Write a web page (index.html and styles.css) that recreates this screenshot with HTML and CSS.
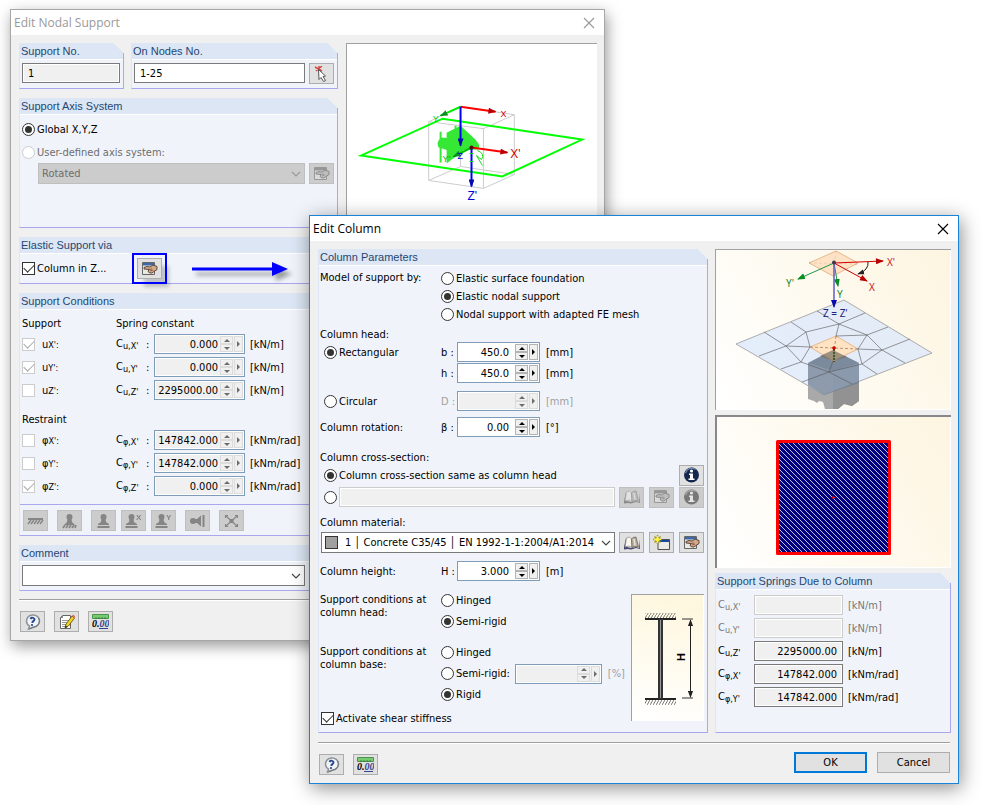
FILE: index.html
```html
<!DOCTYPE html>
<html lang="en">
<head>
  <meta charset="UTF-8" />
  <meta name="viewport" content="width=device-width, initial-scale=1.0"/>
  <title>Edit Nodal Support</title>
  <link rel="stylesheet" href="styles.css">
</head>
<body>
  <!-- Shared icons -->
  <svg class="defs" aria-hidden="true">
    <symbol id="i-close" viewBox="0 0 12 12"><path d="M1 1l10 10M11 1L1 11" fill="none" stroke="currentColor" stroke-width="1.1"/></symbol>
    <symbol id="i-chevron" viewBox="0 0 10 6"><path d="M1 1l4 4 4-4" fill="none" stroke="currentColor" stroke-width="1.1"/></symbol>
    <symbol id="i-edit" viewBox="0 0 17 16">
      <path d="M1.500 1.500h12v12h-12z" fill="#e9e9e2" stroke="#666"/><path d="M2 2h11v2.500H2z" fill="#3f68a8"/>
      <path d="M3 6.500l3-1 3 .5 3-2 4 1.500v3l-3 2-2 1.500H9L7 10.500 8 8.500 3 8z" fill="#d3a888" stroke="#4e3a30" stroke-width=".9"/>
      <path d="M8 8.500l3-.5M9 10l3-1" stroke="#77513e" stroke-width=".8"/>
    </symbol>
    <symbol id="i-book" viewBox="0 0 17 16">
      <path d="M1 12l2-9 1 9 4 1 5-1 3 1V4l1 10-4-1-5 1.500-3-.5-4 .5z" fill="#46466e"/>
      <path d="M3.500 3l3-1 2 2 .5 8.500-3-1.500-4 1z" fill="#faf8ee" stroke="#8c877c" stroke-width=".7"/>
      <path d="M8.500 4l1.500-1.500 3-.5 2.500 10-3-.5-3.500 1z" fill="#b8ad9c" stroke="#5e5850" stroke-width=".7"/><path d="M11 4l1 6.500" stroke="#e8e2d6" stroke-width="1.500"/>
    </symbol>
    <symbol id="i-new" viewBox="0 0 17 16">
      <path d="M5 4.500h11.500v10H5z" fill="#eceae6" stroke="#4d4d4d"/><path d="M6 5h10v2H6z" fill="#1748a0"/>
      <path d="M4.500 0v9M0 4.500h9M1.500 1.500l6 6M7.500 1.500l-6 6" stroke="#a79d1d" stroke-width="1.500"/><path d="M4.500 1v7M1 4.500h7" stroke="#fff23c"/><circle cx="4.500" cy="4.500" r="2" fill="#fff23c"/>
    </symbol>
    <symbol id="i-info" viewBox="0 0 16 16">
      <circle cx="8" cy="8" r="7.500" fill="#14284f"/><path d="M2 6a6.500 6.500 0 0 1 10-3.500" fill="none" stroke="#6c82aa" stroke-width="1.300"/>
      <circle cx="8" cy="4" r="1.600" fill="#fff"/><path d="M5.500 6.500h4v5h1.500v1.500H5v-1.500h1.500v-3.500h-1z" fill="#fff"/>
    </symbol>
    <symbol id="i-help" viewBox="0 0 16 16">
      <path d="M8 1a6.500 6 0 0 1 1 12l-5 2 1-3A6.500 6 0 0 1 8 1z" fill="#f1f4f9" stroke="#8c9197" stroke-width="1.500"/>
      <path d="M14 4a6 6 0 0 1-4 9l-5 2" fill="none" stroke="#73777c"/>
      <path d="M6 5q1-2 3-1 2 1 0 3L8 8v1" fill="none" stroke="#27478f" stroke-width="1.900"/><circle cx="7.500" cy="11" r="1.100" fill="#27478f"/>
    </symbol>
    <symbol id="i-note" viewBox="0 0 17 16">
      <path d="M4.500 1.500h8v13h-10v-11z" fill="#fff" stroke="#666"/><path d="M2 4h3V1" fill="#888"/>
      <path d="M4 6.500h7M4 8.500h6M4 10.500h4M4 12.500h3" stroke="#999"/>
      <path d="M14 2l2.500 2-6 8-3.500 2 1-4z" fill="#f2d221" stroke="#55480e" stroke-width=".8"/><path d="M14 2l1-1.500 2.500 2-1 1.500z" fill="#e06b60"/><path d="M7 14l.5-2.500 2 1.500z" fill="#222"/>
    </symbol>
    <symbol id="i-pick" viewBox="0 0 17 16">
      <path d="M2 1l7 4M9 0L3 5M6 0v3" stroke="#d64848" stroke-width="1.500"/>
      <path d="M5.500 3.500l7 6.500-2.500.5 2.500 4-2 1-2.500-4-2 2z" fill="#fff" stroke="#444" stroke-width=".9"/>
    </symbol>
    <symbol id="i-line" viewBox="0 0 17 16"><path d="M1 5h15v2H1z" fill="currentColor"/><path d="M1 11l3-4M4 11l3-4M7 11l3-4M10 11l3-4M13 11l3-4" stroke="currentColor" stroke-width="1.400"/></symbol>
    <symbol id="i-fixed" viewBox="0 0 17 16"><circle cx="8.500" cy="4" r="3" fill="currentColor"/><path d="M6.500 6h4l.5 3 3 3H3l3-3z" fill="currentColor"/><path d="M2 15l2-3M5 15l2-3M8 15l2-3M11 15l2-3M14 15l1-3" stroke="currentColor" stroke-width="1.700"/></symbol>
    <symbol id="i-hinge" viewBox="0 0 17 16"><circle cx="8.500" cy="4" r="3" fill="currentColor"/><path d="M6.500 6h4l.5 3 3 2v1H3v-1l3-2zM2.500 13h12v2h-12z" fill="currentColor"/></symbol>
    <symbol id="i-side" viewBox="0 0 17 16"><circle cx="4" cy="8" r="3" fill="currentColor"/><path d="M6 6h2l4-3.500v11L8 10H6zM13.500 2h2v12h-2z" fill="currentColor"/></symbol>
    <symbol id="i-free" viewBox="0 0 17 16"><path d="M3 3l11 10M14 3L3 13M2.500 5V2.500H5M12 2.500h2.500V5M2.500 11v2.500H5M12 13.500h2.500V11" fill="none" stroke="currentColor" stroke-width="1.100"/><path d="M6.500 6h4v4h-4z" fill="currentColor"/></symbol>
    <marker id="a-red" viewBox="0 0 8 6" refX="7" refY="3" markerWidth="9" markerHeight="6" markerUnits="userSpaceOnUse" orient="auto"><path d="M0 0l8 3-8 3z" fill="#b80000"/></marker>
    <marker id="a-green" viewBox="0 0 8 6" refX="7" refY="3" markerWidth="8" markerHeight="6" markerUnits="userSpaceOnUse" orient="auto"><path d="M0 0l8 3-8 3z" fill="#078d20"/></marker>
    <marker id="a-blue" viewBox="0 0 8 6" refX="7" refY="3" markerWidth="9" markerHeight="6" markerUnits="userSpaceOnUse" orient="auto"><path d="M0 0l8 3-8 3z" fill="#0808b0"/></marker>
    <marker id="a-dark" viewBox="0 0 8 6" refX="7" refY="3" markerWidth="7" markerHeight="6" markerUnits="userSpaceOnUse" orient="auto-start-reverse"><path d="M0 0l8 3-8 3z" fill="#222"/></marker>
    <pattern id="hatch" width="5" height="5" patternUnits="userSpaceOnUse"><rect width="5" height="5" fill="#000080"/><path d="M-1-1l7 7" stroke="#d5d5ee" stroke-width=".9"/></pattern>
    <pattern id="ground" width="3" height="5" patternUnits="userSpaceOnUse"><path d="M0 5l3-5" stroke="#555" stroke-width=".8"/></pattern>
  </svg>

  <main class="desktop">
    <!-- Nodal support window -->
    <section class="window window-support">
      <header class="titlebar">
        <h1>Edit Nodal Support</h1>
        <button class="close" aria-label="Close"><svg><use href="#i-close"/></svg></button>
      </header>
      <div class="support-content">
        <div class="column">
          <div class="top-groups">
            <section class="group">
              <h2><label for="support-no">Support No.</label></h2>
              <div class="group-body"><input class="text readonly" id="support-no" value="1" readonly></div>
            </section>
            <section class="group">
              <h2><label for="nodes-no">On Nodes No.</label></h2>
              <div class="group-body with-button">
                <input class="text" id="nodes-no" value="1-25">
                <button class="tool" aria-label="Pick nodes"><svg><use href="#i-pick"/></svg></button>
              </div>
            </section>
          </div>

          <section class="group axis-group">
            <h2>Support Axis System</h2>
            <div class="axis-body">
              <label class="option"><input type="radio" name="axis" checked>Global X,Y,Z</label>
              <label class="option off"><input type="radio" name="axis" disabled>User-defined axis system:</label>
              <div class="axis-select">
                <div class="select"><select aria-label="Axis system" disabled><option>Rotated</option></select><svg><use href="#i-chevron"/></svg></div>
                <button class="tool" aria-label="Edit axis system" disabled><svg><use href="#i-edit"/></svg></button>
              </div>
            </div>
          </section>

          <section class="group elastic-group">
            <h2>Elastic Support via</h2>
            <div class="elastic-body">
              <label class="option"><input type="checkbox" checked>Column in Z...</label>
              <button class="tool marked" aria-label="Edit column"><svg><use href="#i-edit"/></svg></button>
              <svg class="arrow" viewBox="0 0 96 20"><path d="M0 10h82" stroke="#00f" stroke-width="3"/><path d="M80 3l16 7-16 7z" fill="#00f"/></svg>
            </div>
          </section>

          <section class="group conditions-group">
            <h2>Support Conditions</h2>
            <div class="conditions">
              <div class="cond-head"><span>Support</span><span>Spring constant</span></div>
              <div class="cond-row">
                <input type="checkbox" id="ux" checked disabled><label for="ux">u<small>X':</small></label>
                <label for="cux">C<sub>u,X'</sub></label><span>:</span>
                <div class="spin off"><input id="cux" value="0.000" readonly><span class="steps"><button aria-label="Up"></button><button aria-label="Down"></button></span><button class="more" aria-label="More"></button></div>
                <span>[kN/m]</span>
              </div>
              <div class="cond-row">
                <input type="checkbox" id="uy" checked disabled><label for="uy">u<small>Y':</small></label>
                <label for="cuy">C<sub>u,Y'</sub></label><span>:</span>
                <div class="spin off"><input id="cuy" value="0.000" readonly><span class="steps"><button aria-label="Up"></button><button aria-label="Down"></button></span><button class="more" aria-label="More"></button></div>
                <span>[kN/m]</span>
              </div>
              <div class="cond-row">
                <input type="checkbox" id="uz" disabled><label for="uz">u<small>Z':</small></label>
                <label for="cuz">C<sub>u,Z'</sub></label><span>:</span>
                <div class="spin off"><input id="cuz" value="2295000.00" readonly><span class="steps"><button aria-label="Up"></button><button aria-label="Down"></button></span><button class="more" aria-label="More"></button></div>
                <span>[kN/m]</span>
              </div>
              <div class="cond-head restraint"><span>Restraint</span></div>
              <div class="cond-row">
                <input type="checkbox" id="px" disabled><label for="px">φ<small>X':</small></label>
                <label for="cpx">C<sub>φ,X'</sub></label><span>:</span>
                <div class="spin off"><input id="cpx" value="147842.000" readonly><span class="steps"><button aria-label="Up"></button><button aria-label="Down"></button></span><button class="more" aria-label="More"></button></div>
                <span>[kNm/rad]</span>
              </div>
              <div class="cond-row">
                <input type="checkbox" id="py" disabled><label for="py">φ<small>Y':</small></label>
                <label for="cpy">C<sub>φ,Y'</sub></label><span>:</span>
                <div class="spin off"><input id="cpy" value="147842.000" readonly><span class="steps"><button aria-label="Up"></button><button aria-label="Down"></button></span><button class="more" aria-label="More"></button></div>
                <span>[kNm/rad]</span>
              </div>
              <div class="cond-row">
                <input type="checkbox" id="pz" checked disabled><label for="pz">φ<small>Z':</small></label>
                <label for="cpz">C<sub>φ,Z'</sub></label><span>:</span>
                <div class="spin off"><input id="cpz" value="0.000" readonly><span class="steps"><button aria-label="Up"></button><button aria-label="Down"></button></span><button class="more" aria-label="More"></button></div>
                <span>[kNm/rad]</span>
              </div>
            </div>
            <div class="presets">
              <button class="tool" aria-label="Line support" disabled><svg><use href="#i-line"/></svg></button>
              <button class="tool" aria-label="Fixed" disabled><svg><use href="#i-fixed"/></svg></button>
              <div class="preset-set">
                <button class="tool" aria-label="Hinged" disabled><svg><use href="#i-hinge"/></svg></button>
                <button class="tool" aria-label="Sliding in X" disabled><svg viewBox="0 0 17 16"><use href="#i-hinge" x="-2" y="0" width="17" height="16"/><text x="11" y="7" class="axis-mark">X</text></svg></button>
                <button class="tool" aria-label="Sliding in Y" disabled><svg viewBox="0 0 17 16"><use href="#i-hinge" x="-2" y="0" width="17" height="16"/><text x="11" y="7" class="axis-mark">Y</text></svg></button>
              </div>
              <button class="tool" aria-label="Sideways" disabled><svg><use href="#i-side"/></svg></button>
              <button class="tool" aria-label="Free" disabled><svg><use href="#i-free"/></svg></button>
            </div>
          </section>

          <section class="group">
            <h2><label for="comment">Comment</label></h2>
            <div class="group-body with-button">
              <div class="select"><select id="comment"><option></option></select><svg><use href="#i-chevron"/></svg></div>
              <button class="tool" aria-label="Pick comment"><svg><use href="#i-book"/></svg></button>
            </div>
          </section>
        </div>

        <div class="preview view-support">
          <svg viewBox="0 0 251 172" role="img" aria-label="Support axes">
            <g fill="none" stroke="#ccc">
              <path d="M82 78v59l55 8V85zM82 78l32-15 54 8-31 14M168 71v60l-31 14M82 137l32-14 54 8M114 63v60"/>
            </g>
            <g fill="#12e512" opacity=".85">
              <path d="M100 89l14-7 16 15-30 23z"/><path d="M95 94l34 3q5 3 3 9l-30 1-10-3q-3-6 3-10z"/><path d="M93 88h2v31h-2zM108 82h2v26h-2z"/>
            </g>
            <path d="M14 112l82-37 140 21-80 37z" fill="none" stroke="#0f0" stroke-width="2"/>
            <path d="M114 63l35 5" stroke="red" stroke-width="2" marker-end="url(#a-red)"/>
            <path d="M114 63l-20 9" stroke="#0e0" stroke-width="2" marker-end="url(#a-green)"/>
            <path d="M114 63v39" stroke="#00f" stroke-width="2" marker-end="url(#a-blue)"/>
            <path d="M125 104l36 5" stroke="red" stroke-width="2" marker-end="url(#a-red)"/>
            <path d="M125 104l-18 9" stroke="#0b0" stroke-width="2" marker-end="url(#a-green)"/>
            <path d="M125 104v39" stroke="#00f" stroke-width="2" marker-end="url(#a-blue)"/>
            <path d="M131 107q8 3 4 9l-5-4 6 10M123 110h4M123 118h4" fill="none" stroke="#1d1"/>
            <circle cx="125" cy="104" r="2" fill="#501010"/>
            <g class="view-label"><text x="154" y="73" fill="#d00000">X</text><text x="86" y="78" fill="#0c0">Y</text><text x="111" y="115" fill="#00d">Z</text><text x="164" y="114" class="large" fill="#d00000">X'</text><text x="96" y="118" fill="#0b0">Y'</text><text x="121" y="157" class="large" fill="#00d">Z'</text></g>
          </svg>
        </div>
      </div>
      <footer class="window-footer">
        <button class="tool" aria-label="Help"><svg><use href="#i-help"/></svg></button>
        <button class="tool" aria-label="Notes"><svg><use href="#i-note"/></svg></button>
        <button class="tool" aria-label="Units">
          <svg viewBox="0 0 17 16"><path d="M.5.5h16v4H.5z" fill="#78cb72" stroke="#4b9548"/><path d="M4 3v2M7 3v2M10 3v2M13 3v2" stroke="#2e6d2f" stroke-width=".8"/><path d="M7 14.500h9" stroke="#31458e"/><text x="0" y="13" class="units-text">0.<tspan fill="#31458e">00</tspan></text></svg>
        </button>
      </footer>
    </section>

    <!-- Column window -->
    <section class="window window-column">
      <header class="titlebar">
        <h1>Edit Column</h1>
        <button class="close" aria-label="Close"><svg><use href="#i-close"/></svg></button>
      </header>
      <div class="column-content">
        <section class="group parameters">
          <h2>Column Parameters</h2>
          <div class="form">
            <div class="row model">
              <span>Model of support by:</span>
              <div class="stack">
                <label class="option"><input type="radio" name="model">Elastic surface foundation</label>
                <label class="option"><input type="radio" name="model" checked>Elastic nodal support</label>
                <label class="option"><input type="radio" name="model">Nodal support with adapted FE mesh</label>
              </div>
            </div>

            <div class="caption">Column head:</div>
            <div class="row field">
              <label class="option indent"><input type="radio" name="head" checked>Rectangular</label>
              <label for="dim-b">b :</label>
              <div class="spin"><input id="dim-b" value="450.0"><span class="steps"><button aria-label="Up"></button><button aria-label="Down"></button></span><button class="more" aria-label="More"></button></div>
              <span>[mm]</span>
            </div>
            <div class="row field">
              <span></span>
              <label for="dim-h">h :</label>
              <div class="spin"><input id="dim-h" value="450.0"><span class="steps"><button aria-label="Up"></button><button aria-label="Down"></button></span><button class="more" aria-label="More"></button></div>
              <span>[mm]</span>
            </div>
            <div class="row field circular">
              <label class="option indent"><input type="radio" name="head">Circular</label>
              <label class="faint" for="dim-d">D :</label>
              <div class="spin off"><input id="dim-d" disabled><span class="steps"><button aria-label="Up" disabled></button><button aria-label="Down" disabled></button></span><button class="more" aria-label="More" disabled></button></div>
              <span class="faint">[mm]</span>
            </div>
            <div class="row field rotation">
              <span>Column rotation:</span>
              <label for="beta">β :</label>
              <div class="spin"><input id="beta" value="0.00"><span class="steps"><button aria-label="Up"></button><button aria-label="Down"></button></span><button class="more" aria-label="More"></button></div>
              <span>[°]</span>
            </div>

            <div class="caption section-caption">Column cross-section:</div>
            <div class="row section-row">
              <label class="option indent"><input type="radio" name="section" checked>Column cross-section same as column head</label>
              <button class="tool" aria-label="Section info"><svg><use href="#i-info"/></svg></button>
            </div>
            <div class="row section-row">
              <input class="indent" type="radio" name="section" aria-label="Own cross-section">
              <input class="text" aria-label="Cross-section" disabled>
              <div class="tools">
                <button class="tool" aria-label="Section library" disabled><svg><use href="#i-book"/></svg></button>
                <button class="tool" aria-label="Edit section" disabled><svg><use href="#i-edit"/></svg></button>
                <button class="tool" aria-label="Section details" disabled><svg><use href="#i-info"/></svg></button>
              </div>
            </div>

            <label class="caption material-caption" for="material">Column material:</label>
            <div class="row material-row">
              <div class="select material"><span class="swatch"></span><select id="material"><option>1 │ Concrete C35/45 │ EN 1992-1-1:2004/A1:2014</option></select><svg><use href="#i-chevron"/></svg></div>
              <div class="tools">
                <button class="tool" aria-label="Material library"><svg><use href="#i-book"/></svg></button>
                <button class="tool" aria-label="New material"><svg><use href="#i-new"/></svg></button>
                <button class="tool" aria-label="Edit material"><svg><use href="#i-edit"/></svg></button>
              </div>
            </div>
            <div class="row field height-row">
              <span>Column height:</span>
              <label for="height">H :</label>
              <div class="spin"><input id="height" value="3.000"><span class="steps"><button aria-label="Up"></button><button aria-label="Down"></button></span><button class="more" aria-label="More"></button></div>
              <span>[m]</span>
            </div>

            <div class="ends">
              <div class="end-options">
                <div class="row end">
                  <span>Support conditions at column head:</span>
                  <div class="stack">
                    <label class="option"><input type="radio" name="at-head">Hinged</label>
                    <label class="option"><input type="radio" name="at-head" checked>Semi-rigid</label>
                  </div>
                </div>
                <div class="row end">
                  <span>Support conditions at column base:</span>
                  <div class="stack">
                    <label class="option"><input type="radio" name="at-base">Hinged</label>
                    <div class="semi">
                      <label class="option"><input type="radio" name="at-base">Semi-rigid:</label>
                      <div class="spin off"><input aria-label="Degree of restraint" disabled><span class="steps"><button aria-label="Up" disabled></button><button aria-label="Down" disabled></button></span><button class="more" aria-label="More" disabled></button></div>
                      <span class="faint">[%]</span>
                    </div>
                    <label class="option"><input type="radio" name="at-base" checked>Rigid</label>
                  </div>
                </div>
                <label class="option shear"><input type="checkbox" checked>Activate shear stiffness</label>
              </div>
              <div class="preview view-height">
                <svg viewBox="0 0 72 126" role="img" aria-label="Column height H">
                  <rect x="13" y="18" width="31" height="5" fill="url(#ground)"/><path d="M13 24h31M13 104h31" stroke="#222" stroke-width="2"/>
                  <rect x="13" y="105" width="31" height="5" fill="url(#ground)"/>
                  <path d="M28.500 24v80" stroke="#333" stroke-width="5"/><path d="M28.500 25v78" stroke="#999"/>
                  <path d="M50 24h11M50 103h11" stroke="#333"/><path d="M58.500 25v77" stroke="#222" marker-start="url(#a-dark)" marker-end="url(#a-dark)"/>
                  <text class="height-mark" transform="translate(53 66) rotate(-90)">H</text>
                </svg>
              </div>
            </div>
          </div>
        </section>

        <div class="column side">
          <div class="preview view-mesh">
            <svg viewBox="1 1 235 160" role="img" aria-label="Column under a meshed surface">
              <path d="M93 114l25-13 26 13v38l-7 5-8-2-6 5h-13l-2-7-4-1-2 2-3-2-6-2z" fill="#a9a9a9"/><path d="M118 122l26-8v38l-7 5-8-2-6 5h-5z" fill="#929292"/>
              <path d="M21 95L129 51l88 53-108 42z" fill="#dce8fb" fill-opacity=".78" stroke="#999" stroke-width=".8"/>
              <path d="M93 114l25-13 26 13v20l-35 12-16-10z" fill="#69798d" opacity=".65"/><path d="M118 101l26 13-26 8-25-8z" fill="#667587" opacity=".45"/>
              <path d="M121 87l22 13-25 12-23-14z" fill="#ffe3c3" stroke="#e2ab7a" stroke-width=".8"/>
              <path d="M124 75L91 83l-20 14 15 16 28 10 33-8 20-14-15-15zM49 83l22 14-27 10M76 73l15 10 4 15-9 15-20 7M102 62l22 13 26-11M173 78l-21 8-31 1M195 90l-28 11 23 13M162 125l-15-10-4-15 9-14M137 135l-23-12-27 10M71 97l24 1M124 75l-3 12M114 123l4-11M143 100l24 1" fill="none" stroke="#555" stroke-width=".6"/>
              <path d="M95 98l48 2M121 87l-3 25M94 14l49 1M121 2l-3 25" stroke="#856044" stroke-width=".6" stroke-dasharray="3 2"/>
              <path d="M118 101l14 7-14 4-13-5z" fill="#756c63" opacity=".7"/><path d="M119 100v13" stroke="#435a24" stroke-width="2" stroke-dasharray="2 1"/><circle cx="119" cy="99" r="1.800" fill="#d00000"/>
              <path d="M121 2l22 12-25 13-24-13z" fill="#fddcbc" fill-opacity=".8" stroke="#e2ab7a" stroke-width=".8"/>
              <path d="M119 14l49-2" stroke="#d00000" stroke-width="1.200" marker-end="url(#a-red)"/><path d="M119 14l33 18" stroke="#d00000" marker-end="url(#a-red)"/>
              <path d="M119 14l4 23" stroke="#1b9945" marker-end="url(#a-green)"/><path d="M119 14L83 30" stroke="#1b9945" marker-end="url(#a-green)"/>
              <path d="M119 14v44" stroke="#6b63cf" stroke-width="1.600" marker-end="url(#a-blue)"/><path d="M153 13q1 8-10 12" fill="none" stroke="#222" marker-end="url(#a-dark)"/><circle cx="119" cy="13.500" r="2" fill="#443355"/>
              <g class="mesh-label"><text x="172" y="17" fill="#d01818">X'</text><text x="154" y="42" fill="#d01818">X</text><text x="71" y="38" fill="#168b3b">Y'</text><text x="122" y="49" fill="#168b3b">Y</text><text x="108" y="68" fill="#22227c">Z = Z'</text></g>
            </svg>
          </div>
          <div class="preview view-section">
            <svg viewBox="2 2 234 151" role="img" aria-label="Square cross-section"><rect x="62.500" y="26.500" width="112" height="112" fill="url(#hatch)" stroke="red" stroke-width="3" stroke-linejoin="round"/><path d="M118 81v3M117 82.500h3" stroke="red"/></svg>
          </div>
          <section class="group springs">
            <h2>Support Springs Due to Column</h2>
            <div class="spring-list">
              <div class="spring-row pale"><label for="s1">C<sub>u,X'</sub></label><input class="text number" id="s1" disabled><span>[kN/m]</span></div>
              <div class="spring-row pale"><label for="s2">C<sub>u,Y'</sub></label><input class="text number" id="s2" disabled><span>[kN/m]</span></div>
              <div class="spring-row"><label for="s3">C<sub>u,Z'</sub></label><input class="text number readonly" id="s3" value="2295000.00" readonly><span>[kN/m]</span></div>
              <div class="spring-row"><label for="s4">C<sub>φ,X'</sub></label><input class="text number readonly" id="s4" value="147842.000" readonly><span>[kNm/rad]</span></div>
              <div class="spring-row"><label for="s5">C<sub>φ,Y'</sub></label><input class="text number readonly" id="s5" value="147842.000" readonly><span>[kNm/rad]</span></div>
            </div>
          </section>
        </div>
      </div>
      <footer class="window-footer">
        <button class="tool" aria-label="Help"><svg><use href="#i-help"/></svg></button>
        <button class="tool" aria-label="Units">
          <svg viewBox="0 0 17 16"><path d="M.5.5h16v4H.5z" fill="#78cb72" stroke="#4b9548"/><path d="M4 3v2M7 3v2M10 3v2M13 3v2" stroke="#2e6d2f" stroke-width=".8"/><path d="M7 14.500h9" stroke="#31458e"/><text x="0" y="13" class="units-text">0.<tspan fill="#31458e">00</tspan></text></svg>
        </button>
        <div class="actions">
          <button class="action primary">OK</button>
          <button class="action">Cancel</button>
        </div>
      </footer>
    </section>
  </main>
</body>
</html>
```
FILE: styles.css
```css
* {
  box-sizing: border-box;
}

body {
  margin: 0;
  background: #fff;
  color: #000;
  font: 11px/13px Tahoma, "DejaVu Sans Condensed", "Noto Sans", sans-serif;
}

button, input, select {
  font: inherit;
  color: inherit;
  margin: 0;
  padding: 0;
}

.defs {
  position: absolute;
  width: 0;
  height: 0;
}

.desktop {
  position: relative;
  min-width: 960px;
  min-height: 100vh;
  overflow: hidden;
}

/* Windows */
.window {
  position: absolute;
  background: #f0f0f0;
}

.window-support {
  top: 9px;
  left: 10px;
  right: 378px;
  border: 1px solid #a6a6a6;
  box-shadow: 2px 5px 14px rgba(0,0,0,0.4);
}

.window-column {
  top: 215px;
  left: 309px;
  right: 24px;
  border: 1px solid #1883d7;
  box-shadow: 2px 4px 18px rgba(0,0,0,0.45);
}

.titlebar {
  display: flex;
  align-items: center;
  justify-content: space-between;
  height: 25px;
  padding: 0 9px 0 3px;
  background: #fff;
}

.titlebar h1 {
  margin: 0;
  font: 12px/16px "Segoe UI", "Open Sans", sans-serif;
}

.window-support .titlebar {
  color: #999;
}

.close {
  border: none;
  background: none;
  height: 12px;
}

.close svg {
  display: block;
  width: 12px;
  height: 12px;
}

.support-content {
  display: grid;
  grid-template-columns: 319px 1fr;
  gap: 8px;
  padding: 8px 7px 8px 8px;
}

.column {
  display: flex;
  flex-direction: column;
  gap: 9px;
}

.top-groups {
  display: grid;
  grid-template-columns: 105px 1fr;
  gap: 7px;
}

.window-footer {
  display: flex;
  gap: 9px;
  margin: 0 8px;
  padding: 11px 0 8px 1px;
  border-top: 1px solid #a0a0a0;
  box-shadow: inset 0 1px #fff;
}

/* Groups */
.group {
  border-left: 1px solid #dce6f4;
  border-bottom: 1px solid #a9a7ee;
  background: linear-gradient(#a9a7ee, #a9a7ee) right 0 top 10px / 1px 100% no-repeat,
    linear-gradient(#f0f4fa, #f0f4fa) 0 16px / 100% 100% no-repeat;
}

.group h2 {
  height: 17px;
  margin: 0 1px 0 0;
  padding-left: 1px;
  border-bottom: 1px solid #fff;
  background: linear-gradient(225deg, #f0f0f0 7px, #dce6f4 7px);
  color: #1f4773;
  font: 11px/17px Arial, "Liberation Sans", sans-serif;
}

.group-body {
  display: flex;
  gap: 4px;
  padding: 3px 4px 4px 2px;
}

.axis-group {
  min-height: 130px;
}

.axis-body {
  display: flex;
  flex-direction: column;
  gap: 10px;
  padding: 8px 4px 4px 2px;
}

.axis-select {
  display: flex;
  gap: 4px;
  margin: -6px 0 0 16px;
}

.elastic-body {
  display: flex;
  align-items: center;
  height: 29px;
  padding: 0 20px 0 2px;
}

.elastic-body .option {
  width: 115px;
}

.elastic-body .arrow {
  width: 96px;
  height: 20px;
  margin-left: 30px;
  filter: drop-shadow(4px 5px 2px rgba(0,0,0,0.35));
}

.marked {
  outline: 2px solid #00f;
  outline-offset: 3px;
  box-shadow: 7px 8px 4px rgba(0,0,0,0.2);
}

/* Controls */
.option {
  display: flex;
  align-items: center;
  gap: 2px;
  white-space: nowrap;
}

.off {
  color: #6d6d6d;
}

.faint {
  color: #a0a0a0;
}

.indent {
  margin-left: 4px;
}

input[type="radio"], input[type="checkbox"] {
  appearance: none;
  flex: none;
  display: grid;
  place-items: center;
  width: 13px;
  height: 13px;
  border: 1px solid #333;
  background: #fff;
}

input[type="radio"] {
  border-radius: 50%;
}

input[type="radio"]:checked::before {
  content: "";
  width: 7px;
  height: 7px;
  border-radius: 50%;
  background: #333;
}

input[type="checkbox"]:checked::before {
  content: "";
  width: 9px;
  height: 5px;
  margin-top: -3px;
  border: solid #333;
  border-width: 0 0 1px 1px;
  transform: rotate(-45deg);
}

input[type="radio"]:disabled, input[type="checkbox"]:disabled {
  border-color: #ccc;
}

input[type="checkbox"]:disabled::before {
  border-color: #aaa;
}

.text {
  flex: 1;
  min-width: 0;
  width: 100%;
  height: 20px;
  padding: 0 5px;
  border: 1px solid #7a7a7a;
  background: #fff;
}

.text.readonly {
  background: #f0f0f0;
  box-shadow: inset 0 0 0 1px #fff;
}

.text:disabled {
  border-color: #ccc;
  background: #f0f0f0;
  box-shadow: inset 0 0 0 1px #fff;
}

.number {
  text-align: right;
}

.tool {
  flex: none;
  display: grid;
  place-items: center;
  width: 25px;
  height: 21px;
  border: 1px solid #adadad;
  background: #e1e1e1;
}

.tool svg {
  width: 17px;
  height: 16px;
}

.tool:disabled {
  border-color: #bfbfbf;
  background: #ccc;
  color: #85857f;
}

.tool:disabled svg {
  filter: grayscale(1);
  opacity: 0.5;
}

.presets .tool:disabled svg {
  opacity: 1;
}

.select {
  flex: 1;
  display: grid;
  align-items: center;
  height: 21px;
  border: 1px solid #7a7a7a;
  background: #fff;
}

.select > * {
  grid-area: 1 / 1;
}

.select select {
  appearance: none;
  width: 100%;
  height: 19px;
  padding: 0 18px 0 3px;
  border: none;
  background: transparent;
  opacity: 1;
}

.select svg {
  justify-self: end;
  width: 10px;
  height: 6px;
  margin-right: 3px;
  color: #444;
  pointer-events: none;
}

.axis-select .select {
  border-color: #bfbfbf;
  background: #ccc;
  color: #6d6d6d;
}

.axis-select .select svg {
  color: #999;
}

.material select {
  padding: 0 13px 0 23px;
}

.swatch {
  width: 13px;
  height: 13px;
  margin-left: 3px;
  border: 1px solid #333;
  background: #a0a0a0;
}

.spin {
  display: flex;
  gap: 1px;
  height: 20px;
  padding: 1px;
  border: 1px solid #7f9db9;
  background: #fff;
}

.spin input {
  flex: 1;
  min-width: 0;
  width: 100%;
  padding-right: 5px;
  border: none;
  background: transparent;
  text-align: right;
}

.spin.off {
  background: #f0f0f0;
  box-shadow: inset 0 0 0 1px #fff;
  color: #000;
}

.cond-row .spin input {
  padding-right: 1px;
}

.steps {
  display: flex;
  flex-direction: column;
  width: 13px;
}

.spin button {
  flex: 1;
  display: grid;
  place-items: center;
  border: 1px solid #b4b4b4;
  background: #f0f0f0;
}

.spin button.more {
  flex: none;
  width: 9px;
}

.spin button::before {
  content: "";
  border: 3px solid transparent;
  border-top-width: 0;
  border-bottom-color: #000;
}

.spin .steps button + button::before {
  border-width: 3px 3px 0;
  border-color: #000 transparent transparent;
}

.spin button.more::before {
  border-width: 3px 0 3px 3px;
  border-color: transparent transparent transparent #000;
}

.spin.off button {
  border-color: #dcdcdc;
}

.spin.off button::before {
  opacity: 0.55;
}

sub, small {
  font-size: 9px;
  line-height: 9px;
}

sub {
  vertical-align: -2px;
}

/* Support conditions */
.conditions {
  display: flex;
  flex-direction: column;
  gap: 3px;
  padding: 7px 2px 8px;
}

.cond-head {
  display: grid;
  grid-template-columns: 94px 1fr;
  margin-bottom: 1px;
}

.restraint {
  margin-top: 10px;
}

.cond-row {
  display: grid;
  grid-template-columns: 20px 74px 30px 8px 91px 1fr;
  align-items: center;
}

.cond-row > :last-child {
  padding-left: 5px;
}

.presets {
  display: flex;
  gap: 9px;
  padding: 5px 3px 4px;
  border-top: 1px solid #a9a7ee;
}

.preset-set {
  display: flex;
  gap: 5px;
}

/* Column window */
.column-content {
  display: grid;
  grid-template-columns: 1fr 236px;
  gap: 7px;
  padding: 8px 7px 9px 8px;
}

.side {
  gap: 5px;
}

.form {
  padding: 3px 4px 7px 1px;
}

.row {
  display: grid;
  grid-template-columns: 121px 1fr;
}

.model > span {
  padding-top: 2px;
}

.stack {
  display: flex;
  flex-direction: column;
}

.stack .option {
  height: 18px;
}

.caption {
  display: block;
  margin-top: 5px;
}

.field {
  grid-template-columns: 121px 16px 83px 1fr;
  align-items: center;
  margin-top: 1px;
}

.field > :last-child {
  padding-left: 6px;
}

.circular {
  margin-top: 8px;
}

.rotation {
  margin-top: 6px;
}

.section-caption {
  margin-top: 14px;
}

.section-row {
  display: flex;
  align-items: center;
  height: 22px;
}

.section-row .tool:last-child {
  margin-left: auto;
}

.section-row > .text {
  margin-left: 2px;
}

.tools {
  display: flex;
  gap: 5px;
  margin-left: 4px;
}

.material-caption {
  margin-top: 8px;
}

.material-row {
  display: flex;
  margin: 3px 0 0 1px;
}

.height-row {
  margin-top: 8px;
}

.ends {
  display: grid;
  grid-template-columns: 1fr 73px;
  margin-top: 9px;
}

.end-options {
  display: flex;
  flex-direction: column;
}

.end + .end {
  margin-top: 10px;
}

.end > span {
  padding: 3px 12px 0 0;
}

.end .option {
  height: 21px;
}

.semi {
  display: flex;
  align-items: center;
  justify-content: space-between;
}

.semi .spin {
  width: 87px;
}

.semi .faint {
  padding-right: 6px;
}

.shear {
  margin: 7px 0 0 1px;
}

/* Drawings */
.preview {
  border: solid #a0a0a0;
  border-width: 1px 0 0 1px;
  background: linear-gradient(60deg, #fff, #fdf5e0);
  box-shadow: inset -1px -1px #fff;
}

.preview svg {
  display: block;
  width: 100%;
}

.view-support {
  background: #fff;
}

.view-height {
  align-self: start;
  margin-top: 4px;
  background: linear-gradient(15deg, #fff, #fef6dc);
}

.view-mesh, .view-section {
  overflow: hidden;
}

.view-section {
  border-width: 2px 0 0 2px;
  border-color: #888;
}

.view-label {
  font: 9px "Liberation Sans", sans-serif;
}

.view-label .large {
  font-size: 12px;
}

.mesh-label {
  font: 10px "Noto Sans", sans-serif;
}

.height-mark {
  font: bold 11px "Liberation Sans", sans-serif;
}

.axis-mark {
  font: bold 8px "Liberation Sans", sans-serif;
  fill: currentColor;
}

.units-text {
  font: italic bold 10px "Liberation Serif", serif;
}

.springs {
  flex: 1;
}

.spring-list {
  display: flex;
  flex-direction: column;
  gap: 3px;
  padding: 5px 2px;
}

.spring-row {
  display: grid;
  grid-template-columns: 36px 89px 1fr;
  align-items: center;
}

.spring-row span {
  padding-left: 5px;
}

.pale {
  color: #777;
}

.actions {
  display: flex;
  gap: 10px;
  margin: -2px 0 0 auto;
}

.action {
  width: 73px;
  height: 21px;
  border: 1px solid #adadad;
  background: #e1e1e1;
}

.action.primary {
  border: 2px solid #0078d7;
}
```
